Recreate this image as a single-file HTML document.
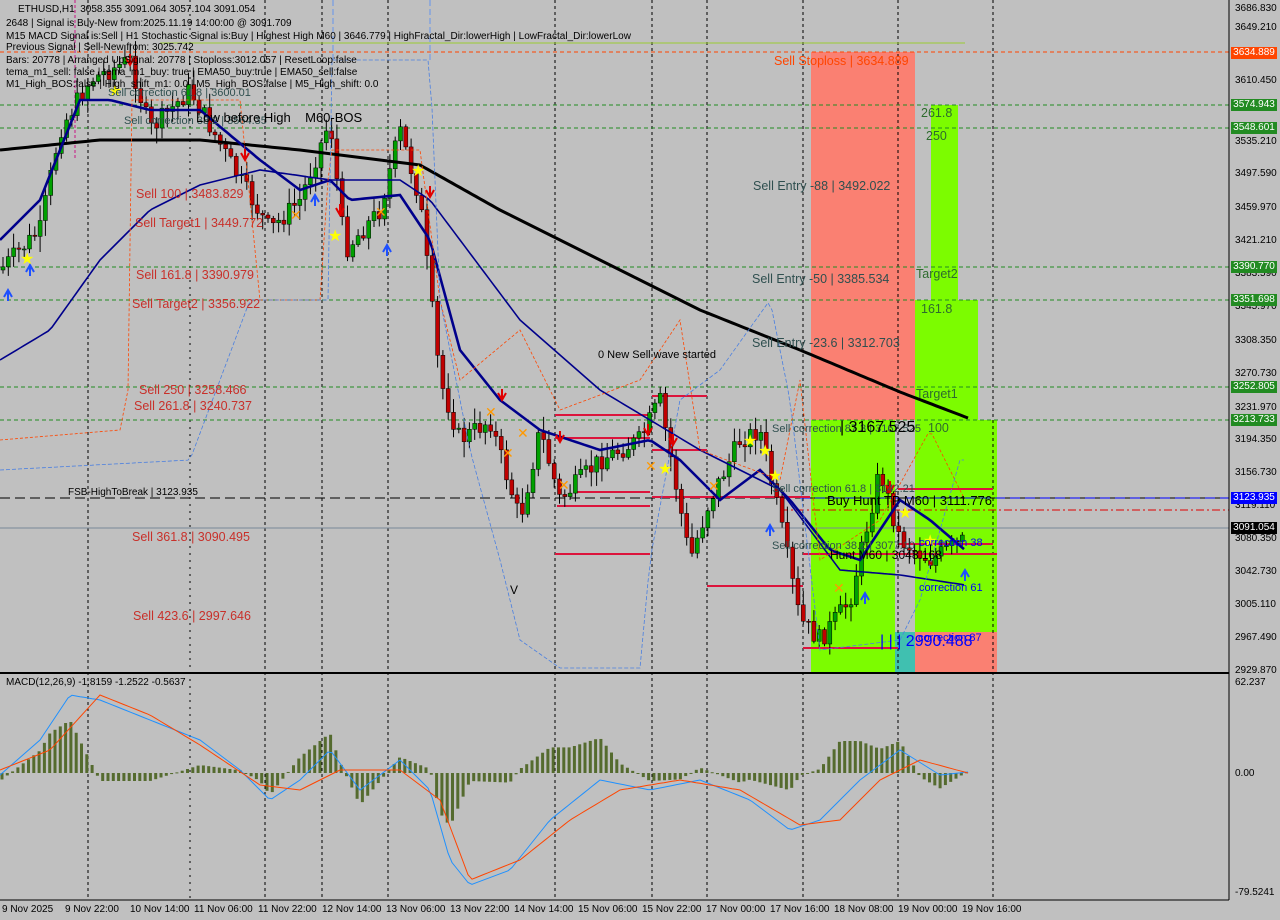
<!DOCTYPE html>
<html><head><meta charset="utf-8"><style>
html,body{margin:0;padding:0;background:#c0c0c0;}
#w{position:relative;width:1280px;height:920px;overflow:hidden;background:#c0c0c0;font-family:"Liberation Sans",sans-serif;}
svg{position:absolute;left:0;top:0;}
.t{position:absolute;white-space:nowrap;line-height:1;}
.s{font-size:10px;color:#000;}
.r{font-size:12.5px;color:#c8302a;}
.g{font-size:12.5px;color:#2f4f4f;}
.gg{font-size:12.5px;color:#2e6b2e;}
.ax{position:absolute;left:1235px;font-size:10px;color:#000;}
.bx{position:absolute;left:1231px;width:46px;height:12px;font-size:10px;color:#fff;text-align:center;line-height:12px;}
.tm{position:absolute;top:904px;font-size:10px;color:#000;}
</style></head><body><div id="w">
<svg id="sv" width="1280" height="920" xmlns="http://www.w3.org/2000/svg">
<rect x="811" y="52" width="104" height="368" fill="#fa8072"/>
<rect x="931" y="105" width="27" height="195" fill="#7cfc00"/>
<rect x="915" y="300" width="63" height="120" fill="#7cfc00"/>
<rect x="811" y="420" width="84" height="252" fill="#7cfc00"/>
<rect x="915" y="420" width="82" height="212" fill="#7cfc00"/>
<rect x="895" y="632" width="20" height="40" fill="#40c0b0"/>
<rect x="915" y="632" width="82" height="40" fill="#fa8072"/>
<g stroke="#000" stroke-dasharray="3,3" stroke-width="1">
<line x1="88" y1="0" x2="88" y2="900"/><line x1="322" y1="0" x2="322" y2="900"/><line x1="388" y1="0" x2="388" y2="900"/><line x1="555" y1="0" x2="555" y2="900"/><line x1="652" y1="0" x2="652" y2="900"/><line x1="707" y1="0" x2="707" y2="900"/><line x1="803" y1="0" x2="803" y2="900"/><line x1="898" y1="0" x2="898" y2="900"/><line x1="993" y1="0" x2="993" y2="900"/><line x1="265" y1="0" x2="265" y2="900"/><line x1="190" y1="0" x2="190" y2="900" stroke-dasharray="2,5"/>
</g>
<line x1="75" y1="0" x2="75" y2="160" stroke="#c71585" stroke-dasharray="3,2"/>
<line x1="333" y1="0" x2="333" y2="60" stroke="#6495ed" stroke-dasharray="6,3"/>
<line x1="430" y1="0" x2="430" y2="60" stroke="#6495ed" stroke-dasharray="6,3"/>
<g stroke="#228b22" stroke-dasharray="4,3">
<line x1="0" y1="105" x2="1229" y2="105"/><line x1="0" y1="128" x2="1229" y2="128"/><line x1="0" y1="267" x2="1229" y2="267"/><line x1="0" y1="300" x2="1229" y2="300"/><line x1="0" y1="387" x2="1229" y2="387"/><line x1="0" y1="420" x2="1229" y2="420"/>
</g>
<line x1="0" y1="52" x2="1229" y2="52" stroke="#ff4500" stroke-dasharray="4,3"/>
<line x1="160" y1="43" x2="965" y2="43" stroke="#9acd32"/>
<line x1="0" y1="498" x2="1229" y2="498" stroke="#000" stroke-dasharray="10,5"/>
<line x1="800" y1="498" x2="1229" y2="498" stroke="#0000ff" stroke-dasharray="10,5"/>
<line x1="780" y1="510" x2="1229" y2="510" stroke="#e00000" stroke-dasharray="8,3,2,3"/>
<line x1="0" y1="528" x2="1229" y2="528" stroke="#778899"/>
<g stroke="#dc143c" stroke-width="2">
<line x1="555" y1="415" x2="652" y2="415"/><line x1="555" y1="438" x2="650" y2="438"/><line x1="575" y1="492" x2="650" y2="492"/><line x1="557" y1="506" x2="650" y2="506"/><line x1="555" y1="554" x2="650" y2="554"/><line x1="652" y1="396" x2="707" y2="396"/><line x1="652" y1="450" x2="707" y2="450"/><line x1="652" y1="497" x2="810" y2="497"/><line x1="707" y1="586" x2="803" y2="586"/><line x1="803" y1="648" x2="898" y2="648"/><line x1="803" y1="554" x2="997" y2="554"/><line x1="898" y1="489" x2="993" y2="489"/><line x1="898" y1="544" x2="993" y2="544"/>
</g>
<g id="cd"></g>
<polyline id="ma1" fill="none" stroke="#000" stroke-width="3"/>
<polyline id="ma3" fill="none" stroke="#00008b" stroke-width="1.6"/>
<polyline id="ma2" fill="none" stroke="#00008b" stroke-width="2.6"/>
<polyline id="or" fill="none" stroke="#ff4500" stroke-width="0.8" stroke-dasharray="3,2"/>
<polyline id="bl" fill="none" stroke="#4a7fe0" stroke-width="0.8" stroke-dasharray="4,2"/>
<line x1="0" y1="673" x2="1229" y2="673" stroke="#000" stroke-width="2"/>
<line x1="1229" y1="0" x2="1229" y2="900" stroke="#000"/>
<line x1="0" y1="900" x2="1229" y2="900" stroke="#000"/>
<g id="hist"></g>
<polyline id="mb" fill="none" stroke="#1e90ff" stroke-width="1"/>
<polyline id="mo" fill="none" stroke="#ff4500" stroke-width="1"/>
<g id="mk"></g>
</svg>
<div class="t s" style="left:18px;top:5px">ETHUSD,H1 &nbsp;3058.355 3091.064 3057.104 3091.054</div>
<div class="t s" style="left:6px;top:19px">2648 | Signal is Buy-New from:2025.11.19 14:00:00 @ 3091.709</div>
<div class="t s" style="left:6px;top:32px">M15 MACD Signal is:Sell | H1 Stochastic Signal is:Buy | Highest High M60 | 3646.779 | HighFractal_Dir:lowerHigh | LowFractal_Dir:lowerLow</div>
<div class="t s" style="left:6px;top:43px">Previous Signal | Sell-New from: 3025.742</div>
<div class="t s" style="left:6px;top:56px">Bars: 20778 | Arranged UpSignal: 20778 | Stoploss:3012.057 | ResetLoop:false</div>
<div class="t s" style="left:6px;top:68px">tema_m1_sell: false | tema_m1_buy: true | EMA50_buy:true | EMA50_sell:false</div>
<div class="t s" style="left:6px;top:80px">M1_High_BOS:false | High_shift_m1: 0.0 | M5_High_BOS:false | M5_High_shift: 0.0</div>
<div class="t" style="left:108px;top:88px;font-size:11px;color:#2f4f4f">Sell correction 61.8 | 3600.01</div>
<div class="t" style="left:124px;top:116px;font-size:11px;color:#2f4f4f">Sell correction 38.2 | 3564.35</div>
<div class="t" style="left:196px;top:111px;font-size:13px;color:#000">Low before High &nbsp;&nbsp;&nbsp;M60-BOS</div>
<div class="t r" style="left:136px;top:188px">Sell 100 | 3483.829</div>
<div class="t r" style="left:135px;top:217px">Sell Target1 | 3449.772</div>
<div class="t r" style="left:136px;top:269px">Sell 161.8 | 3390.979</div>
<div class="t r" style="left:132px;top:298px">Sell Target2 | 3356.922</div>
<div class="t r" style="left:139px;top:384px">Sell 250 | 3258.466</div>
<div class="t r" style="left:134px;top:400px">Sell 261.8 | 3240.737</div>
<div class="t r" style="left:132px;top:531px">Sell 361.8 | 3090.495</div>
<div class="t r" style="left:133px;top:610px">Sell 423.6 | 2997.646</div>
<div class="t s" style="left:68px;top:488px">FSB-HighToBreak | 3123.935</div>
<div class="t" style="left:510px;top:584px;font-size:12px">V</div>
<div class="t" style="left:774px;top:55px;font-size:12.5px;color:#ff4500">Sell Stoploss | 3634.889</div>
<div class="t g" style="left:753px;top:180px">Sell Entry -88 | 3492.022</div>
<div class="t g" style="left:752px;top:273px">Sell Entry -50 | 3385.534</div>
<div class="t g" style="left:752px;top:337px">Sell Entry -23.6 | 3312.703</div>
<div class="t" style="left:598px;top:350px;font-size:11px;color:#000">0 New Sell wave started</div>
<div class="t gg" style="left:921px;top:107px">261.8</div>
<div class="t gg" style="left:926px;top:130px">250</div>
<div class="t gg" style="left:916px;top:268px">Target2</div>
<div class="t gg" style="left:921px;top:303px">161.8</div>
<div class="t gg" style="left:916px;top:388px">Target1</div>
<div class="t gg" style="left:928px;top:422px">100</div>
<div class="t" style="left:772px;top:424px;font-size:11px;color:#2f4f4f">Sell correction 87.3 | 3167.525</div>
<div class="t" style="left:840px;top:420px;font-size:16px;color:#000">| 3167.525</div>
<div class="t" style="left:772px;top:484px;font-size:11px;color:#2f4f4f">Sell correction 61.8 | 3142.21</div>
<div class="t" style="left:772px;top:541px;font-size:11px;color:#2f4f4f">Sell correction 38.2 | 3077.10</div>
<div class="t" style="left:827px;top:494px;font-size:13px;color:#000">Buy Hunt TP M60 | 3111.776</div>
<div class="t" style="left:830px;top:549px;font-size:12px;color:#000">Hunt M60 | 3048.168</div>
<div class="t" style="left:919px;top:538px;font-size:11px;color:#0000ff">correction 38</div>
<div class="t" style="left:919px;top:583px;font-size:11px;color:#0000ff">correction 61</div>
<div class="t" style="left:918px;top:633px;font-size:11px;color:#0000ff">correction 87</div>
<div class="t" style="left:880px;top:634px;font-size:16px;color:#0000ff">| | | 2990.488</div>
<div class="t s" style="left:6px;top:678px">MACD(12,26,9) -1.8159 -1.2522 -0.5637</div>
<div class="ax" style="top:3px">3686.830</div><div class="ax" style="top:22px">3649.210</div><div class="ax" style="top:75px">3610.450</div>
<div class="ax" style="top:136px">3535.210</div><div class="ax" style="top:168px">3497.590</div><div class="ax" style="top:202px">3459.970</div><div class="ax" style="top:235px">3421.210</div><div class="ax" style="top:268px">3383.590</div><div class="ax" style="top:301px">3345.970</div><div class="ax" style="top:335px">3308.350</div><div class="ax" style="top:368px">3270.730</div><div class="ax" style="top:402px">3231.970</div><div class="ax" style="top:434px">3194.350</div><div class="ax" style="top:467px">3156.730</div><div class="ax" style="top:500px">3119.110</div><div class="ax" style="top:533px">3080.350</div><div class="ax" style="top:566px">3042.730</div><div class="ax" style="top:599px">3005.110</div><div class="ax" style="top:632px">2967.490</div><div class="ax" style="top:665px">2929.870</div>
<div class="ax" style="top:677px">62.237</div><div class="ax" style="top:768px">0.00</div><div class="ax" style="top:887px">-79.5241</div>
<div class="bx" style="top:47px;background:#ff4500">3634.889</div>
<div class="bx" style="top:99px;background:#228b22">3574.943</div>
<div class="bx" style="top:122px;background:#228b22">3548.601</div>
<div class="bx" style="top:261px;background:#228b22">3390.770</div>
<div class="bx" style="top:294px;background:#228b22">3351.698</div>
<div class="bx" style="top:381px;background:#228b22">3252.805</div>
<div class="bx" style="top:414px;background:#228b22">3213.733</div>
<div class="bx" style="top:492px;background:#0000ff">3123.935</div>
<div class="bx" style="top:522px;background:#000">3091.054</div>
<div class="tm" style="left:2px">9 Nov 2025</div><div class="tm" style="left:65px">9 Nov 22:00</div><div class="tm" style="left:130px">10 Nov 14:00</div><div class="tm" style="left:194px">11 Nov 06:00</div><div class="tm" style="left:258px">11 Nov 22:00</div><div class="tm" style="left:322px">12 Nov 14:00</div><div class="tm" style="left:386px">13 Nov 06:00</div><div class="tm" style="left:450px">13 Nov 22:00</div><div class="tm" style="left:514px">14 Nov 14:00</div><div class="tm" style="left:578px">15 Nov 06:00</div><div class="tm" style="left:642px">15 Nov 22:00</div><div class="tm" style="left:706px">17 Nov 00:00</div><div class="tm" style="left:770px">17 Nov 16:00</div><div class="tm" style="left:834px">18 Nov 08:00</div><div class="tm" style="left:898px">19 Nov 00:00</div><div class="tm" style="left:962px">19 Nov 16:00</div>
</div>
<script>
function interp(pts,x){for(var i=0;i<pts.length-1;i++){if(x<=pts[i+1][0]){var a=pts[i],b=pts[i+1];return a[1]+(b[1]-a[1])*(x-a[0])/(b[0]-a[0]);}}return pts[pts.length-1][1];}
function ps(pts,x0,x1){var s=[];for(var x=x0;x<=x1;x+=4)s.push(x+","+interp(pts,x).toFixed(1));return s.join(" ");}
var price=[[0,270],[40,230],[60,130],[90,80],[130,60],[150,130],[190,90],[240,180],[270,230],[300,200],[330,120],[345,250],[380,210],[400,130],[420,200],[440,380],[460,440],[490,420],[520,520],[540,430],[560,500],[600,460],[640,440],[660,400],[690,560],[710,500],[740,440],[760,430],[780,520],[800,620],[820,640],[850,600],[880,470],[900,540],[930,560],[965,540]];
var seed=7;function rnd(){seed=(seed*9301+49297)%233280;return seed/233280;}
var g=document.getElementById("cd"),h="";
var prev=interp(price,0);
for(var x=3;x<966;x+=5.3){var c=interp(price,x)+(rnd()-0.5)*20;var o=prev;var hi=Math.min(o,c)-rnd()*14-2,lo=Math.max(o,c)+rnd()*14+2;
h+='<line x1="'+x+'" y1="'+hi+'" x2="'+x+'" y2="'+lo+'" stroke="#000" stroke-width="1"/>';
var up=c<o;h+='<rect x="'+(x-2)+'" y="'+Math.min(o,c)+'" width="4" height="'+Math.max(1,Math.abs(o-c))+'" fill="'+(up?"#00a000":"#c00000")+'" stroke="#000" stroke-width="0.5"/>';prev=c;}
g.innerHTML=h;
document.getElementById("ma1").setAttribute("points",ps([[0,150],[100,140],[200,140],[300,150],[420,165],[500,210],[600,260],[700,310],[800,350],[900,392],[968,418]],0,968));
document.getElementById("ma2").setAttribute("points",ps([[0,240],[40,200],[80,100],[110,100],[150,110],[200,110],[260,160],[300,190],[330,180],[350,200],[400,195],[430,240],[460,350],[500,400],[540,430],[600,450],[650,440],[680,460],[720,500],[760,470],[790,500],[830,550],[860,560],[900,500],[930,520],[965,550]],0,965));
document.getElementById("ma3").setAttribute("points",ps([[0,360],[50,330],[100,260],[150,210],[200,185],[260,170],[330,180],[400,180],[430,200],[520,320],[600,390],[700,450],[780,490],[840,570],[900,575],[965,585]],0,965));
document.getElementById("or").setAttribute("points",ps([[0,440],[120,430],[130,380],[130,100],[240,100],[260,300],[320,300],[330,150],[420,150],[440,300],[460,380],[520,330],[560,410],[640,380],[680,320],[700,450],[780,480],[800,380],[820,560],[880,520],[930,430],[965,500]],0,965));
document.getElementById("bl").setAttribute("points",ps([[0,470],[190,460],[250,300],[330,300],[330,60],[430,60],[440,300],[470,450],[500,560],[520,640],[560,668],[640,668],[650,560],[680,400],[720,370],[770,300],[790,400],[820,650],[900,640],[920,600],[960,460]],0,965));
var mac=[[0,775],[40,740],[70,695],[100,700],[150,720],[200,740],[240,770],[270,800],[300,780],[330,750],[360,790],[400,760],[430,790],[450,860],[470,885],[510,870],[550,820],[600,780],[650,790],[700,780],[750,800],[790,830],[820,820],[860,780],[900,750],[940,775],[968,772]];
var sig=[[0,770],[50,750],[100,695],[150,715],[200,745],[260,785],[300,790],[340,770],[400,770],[440,800],[470,880],[520,860],[570,820],[620,790],[680,780],[740,790],[800,825],[840,820],[880,780],[920,760],[968,773]];
document.getElementById("mb").setAttribute("points",ps(mac,0,968));
document.getElementById("mo").setAttribute("points",ps(sig,0,968));
var hh="";for(var x=2;x<968;x+=5.3){var v=interp(mac,x)-interp(sig,x);v=v*1.6;hh+='<rect x="'+(x-1.5)+'" y="'+Math.min(773,773+v)+'" width="3" height="'+Math.max(1,Math.abs(v))+'" fill="#556b2f"/>';}
document.getElementById("hist").innerHTML=hh;
var mk="";
var arrU=[[8,295],[30,270],[315,200],[387,250],[770,530],[865,598],[965,575]],arrD=[[130,60],[245,155],[340,210],[430,192],[502,395],[560,437],[648,430],[673,440],[890,487]];
arrU.forEach(function(p){mk+='<path d="M'+(p[0]-4)+' '+(p[1]+2)+' L'+p[0]+' '+(p[1]-5)+' L'+(p[0]+4)+' '+(p[1]+2)+' M'+p[0]+' '+(p[1]-4)+' V'+(p[1]+6)+'" stroke="#1e50ff" stroke-width="2" fill="none"/>';});
arrD.forEach(function(p){mk+='<path d="M'+(p[0]-4)+' '+(p[1]-2)+' L'+p[0]+' '+(p[1]+5)+' L'+(p[0]+4)+' '+(p[1]-2)+' M'+p[0]+' '+(p[1]+4)+' V'+(p[1]-6)+'" stroke="#e00000" stroke-width="2" fill="none"/>';});
var stars=[[27,258],[115,90],[335,235],[418,170],[665,468],[750,440],[765,450],[775,475],[905,512],[930,540]];
stars.forEach(function(p){mk+='<text x="'+(p[0]-7)+'" y="'+(p[1]+6)+'" font-size="16" fill="#ffff00" font-family="DejaVu Sans">★</text>';});
var xs=[[295,215],[490,412],[507,453],[522,433],[563,485],[650,466],[713,486],[838,588],[380,212]];
xs.forEach(function(p){mk+='<text x="'+(p[0]-5)+'" y="'+(p[1]+5)+'" font-size="14" font-weight="bold" fill="#ff9900" font-family="DejaVu Sans">✕</text>';});
document.getElementById("mk").innerHTML=mk;
</script>
</body></html>
